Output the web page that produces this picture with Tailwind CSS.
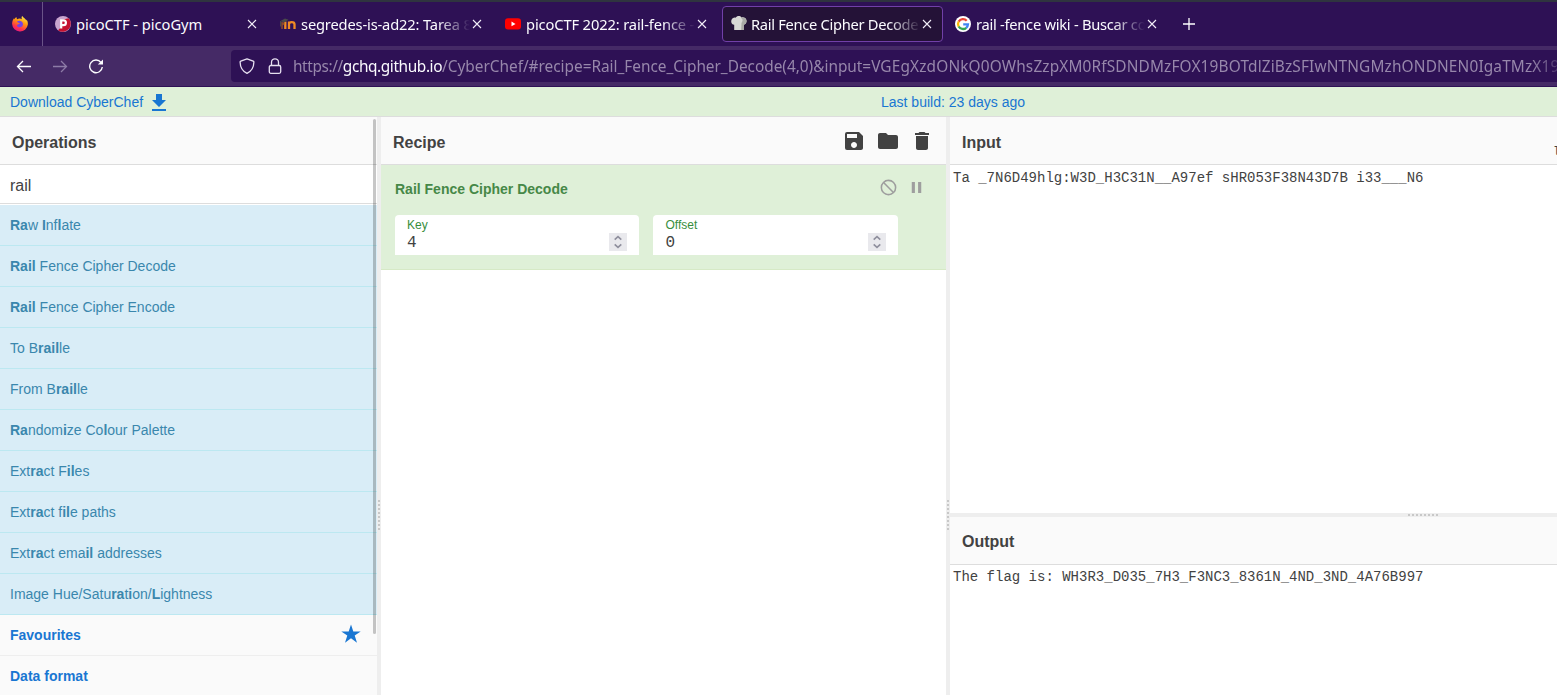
<!DOCTYPE html>
<html lang="en">
<head>
<meta charset="utf-8">
<title>Rail Fence Cipher Decode - CyberChef</title>
<script src="https://cdn.jsdelivr.net/npm/@tailwindcss/browser@4"></script>
</head>
<body class="w-[1557px] h-[695px] overflow-hidden bg-white font-['Liberation_Sans',sans-serif] text-sm text-[#424242] flex flex-col">
<svg class="hidden">
  <symbol id="close" viewBox="0 0 10 10"><path d="M1 1l8 8M9 1L1 9" stroke="#f3eef9" stroke-width="1.1" fill="none"/></symbol>
  <symbol id="spin" viewBox="0 0 18 18"><path d="M0 0h18v18H0z" fill="#e9e9ed"/><path d="M5.700 6.700L9 3.600l3.300 3.100M5.700 11.300L9 14.400l3.300-3.100" stroke="#8f8f9d" stroke-width="1.600" fill="none"/></symbol>
</svg>

<header class="shrink-0 h-[87px] border-t-2 border-[#2f343f] bg-[#2e1155] font-['Noto_Sans',sans-serif] text-[#fbfbfe]">
  <div class="h-11 flex items-center">
    <div class="w-[43px] h-11 border-r border-[#6a5488] flex items-center pl-3">
      <svg class="size-4" viewBox="0 0 16 16">
        <defs><linearGradient id="ff" x1=".8" y1="0" x2=".3" y2="1"><stop offset="0" stop-color="#fff44f"/><stop offset=".4" stop-color="#ff980e"/><stop offset=".75" stop-color="#ff3647"/><stop offset="1" stop-color="#e31587"/></linearGradient></defs>
        <path d="M10.300 0c-1 1-.9 2.300-.3 3.200C8.700 2.200 6.500 2.300 5.200 3.200 4.500 2.600 4.400 1.800 4.500 1.100 3.500 1.600 2.700 2.500 2.300 3.200L2 2.200C.8 3.500.1 5.700.1 8.100a7.900 7.900 0 0 0 15.700.6c.3-2.400-.5-4.400-1.400-5.200l.2 1.300C13.800 2.700 11.200 2 10.300 0z" fill="url(#ff)"/>
        <path d="M5 5.500c1.300-1 3.200-1 4.600 0 1.500 1.200 1.900 3.200.7 4.700-1.200 1.400-3.700 1.500-4.900.2C4.500 9.400 5 8.500 7.200 8c1-.5.4-1.200-.8-1.300C5.800 6.600 5.200 6.200 5 5.500z" fill="#7542e5"/>
      </svg>
    </div>
    <div class="flex gap-1">
      <div class="w-[221px] h-9 flex items-center pl-3">
        <svg class="size-4 shrink-0" viewBox="0 0 16 16"><circle cx="8" cy="8" r="8" fill="#c9a5cf"/><path d="M13.600 2.300A8 8 0 0 1 3 14.200l3-3V4z" fill="#c41230"/><path d="M6.200 12.500V4.300h2.300a2.400 2.400 0 0 1 0 4.800H6.500" fill="none" stroke="#fff" stroke-width="2.200"/></svg>
        <span class="ml-[5px] w-[169px] text-[14.7px] tracking-[-0.04px] leading-9 whitespace-nowrap overflow-hidden">picoCTF - picoGym</span>
        <svg class="size-[10px] shrink-0 ml-[2px]"><use href="#close"/></svg>
      </div>
      <div class="w-[221px] h-9 flex items-center pl-3">
        <svg class="size-4 shrink-0" viewBox="0 0 16 16"><path d="M5.300 13V5.500M9 13V8.300c0-3 5.500-3 5.500 0V13M9 13V5.500" fill="none" stroke="#f08a24" stroke-width="2.300"/><path d="M0 5.200L5 2.500l3.500 1.300-3.800 2.500zM0 5V10.500h1V6z" fill="#4a4a4a"/><path d="M1.300 6l3 .6v2l-1.500.6V13H1.300z" fill="#8a4b2c"/></svg>
        <span class="ml-[5px] w-[169px] text-[14.7px] tracking-[-0.16px] leading-9 whitespace-nowrap overflow-hidden [mask-image:linear-gradient(to_left,transparent,black_32px)]">segredes-is-ad22: Tarea 8</span>
        <svg class="size-[10px] shrink-0 ml-[2px]"><use href="#close"/></svg>
      </div>
      <div class="w-[221px] h-9 flex items-center pl-3">
        <svg class="size-4 shrink-0" viewBox="0 0 16 16"><rect y="2.200" width="16" height="11.300" rx="3" fill="#f00"/><path d="M6.500 5.600v4.600L10.500 7.900z" fill="#fff"/></svg>
        <span class="ml-[5px] w-[169px] text-[14.7px] tracking-[-0.13px] leading-9 whitespace-nowrap overflow-hidden [mask-image:linear-gradient(to_left,transparent,black_32px)]">picoCTF 2022: rail-fence -</span>
        <svg class="size-[10px] shrink-0 ml-[2px]"><use href="#close"/></svg>
      </div>
      <div class="w-[221px] h-9 ml-1 flex items-center pl-2 rounded bg-[#241237] border border-[#7140a8]">
        <svg class="size-4 shrink-0 mt-[-2px]" viewBox="0 0 16 16"><path d="M3.200 15V9.800C.8 9.300-.2 7.300.4 5.200 1 3 3 2.300 4.700 2.700 5.800.6 9.200.4 10.400 2.400c2.300-.7 4.800.5 5.100 3 .3 2-.8 4-2.700 4.400V15z" fill="#d8d8d5"/><path d="M10 3c2 1 2 3 .5 5l-.3 7h2.600V9.800c3-.8 3.600-4.400 1.400-6.400C13 2.300 11 2.300 10 3z" fill="#a9a9a6"/></svg>
        <span class="ml-[4px] w-[170px] text-[14.7px] tracking-[-0.3px] leading-9 whitespace-nowrap overflow-hidden [mask-image:linear-gradient(to_left,transparent,black_32px)]">Rail Fence Cipher Decode</span>
        <svg class="size-[10px] shrink-0 ml-[1px]"><use href="#close"/></svg>
      </div>
      <div class="w-[221px] h-9 flex items-center pl-2">
        <svg class="size-4 shrink-0" viewBox="0 0 16 16"><circle cx="8" cy="8" r="8" fill="#fff"/><g fill="none" stroke-width="2.300"><path d="M11.700 4.700A5 5 0 0 0 3.700 5.600" stroke="#ea4335"/><path d="M3.700 5.500A5 5 0 0 0 3.700 10.600" stroke="#fbbc05"/><path d="M3.700 10.500A5 5 0 0 0 11.300 11.800" stroke="#34a853"/><path d="M11.200 11.900A5 5 0 0 0 13 8.300H8.200" stroke="#4285f4"/></g></svg>
        <span class="ml-[5px] w-[169px] text-[14.7px] tracking-[-0.27px] leading-9 whitespace-nowrap overflow-hidden [mask-image:linear-gradient(to_left,transparent,black_32px)]">rail -fence wiki - Buscar co</span>
        <svg class="size-[10px] shrink-0 ml-[2px]"><use href="#close"/></svg>
      </div>
    </div>
    <svg class="size-3 ml-[15px]" viewBox="0 0 12 12"><path d="M6 0v12M0 6h12" stroke="#fff" stroke-width="1.300"/></svg>
  </div>
  <div class="h-10 bg-[#452a66] flex items-center">
    <div class="flex pl-4 gap-5 w-[231px] shrink-0">
      <svg class="size-4" viewBox="0 0 16 16" fill="none" stroke="#fbfbfe" stroke-width="1.300"><path d="M15 8.500H1.500M7 3L1.500 8.500 7 14"/></svg>
      <svg class="size-4" viewBox="0 0 16 16" fill="none" stroke="#8d7ba6" stroke-width="1.300"><path d="M1 8.500h13.500M9 3l5.500 5.500L9 14"/></svg>
      <svg class="size-4" viewBox="0 0 16 16" fill="none" stroke="#fbfbfe" stroke-width="1.400"><path d="M13 4.500A6.300 6.300 0 1 0 14.300 9"/><path d="M15 1.500v5H9.800z" fill="#fbfbfe" stroke="none"/></svg>
    </div>
    <div class="flex-1 min-w-0 h-8 rounded-l bg-[#2e1155] flex items-center pl-2">
      <svg class="size-4 shrink-0" viewBox="0 0 16 16" fill="none" stroke="#e6dff0" stroke-width="1.300"><path d="M8 .8l6.200 2.300c.5.200.7.500.7.900C14.800 9 13 13 8 15.300 3 13 1.200 9 1.100 4c0-.4.200-.7.700-.9z" stroke-linejoin="round"/></svg>
      <svg class="size-4 shrink-0 ml-3" viewBox="0 0 16 16" fill="none" stroke="#e6dff0" stroke-width="1.300"><rect x="2.300" y="7.500" width="11.400" height="7.800" rx="1.500"/><path d="M4.500 7.500V4.300a3.500 3.500 0 0 1 7 0v3.200"/></svg>
      <div class="ml-[10px] mt-[2px] flex-1 min-w-0 overflow-hidden whitespace-nowrap text-[15.4px] leading-8 text-[#9787ab] [mask-image:linear-gradient(to_left,rgb(0_0_0/0.3),black_26px)]"><span class="tracking-[-0.4px]">https://<span class="text-[#fbfbfe]">gchq.github.io</span></span><span class="tracking-[-0.02px]">/CyberChef/#recipe=Rail_Fence_Cipher_Decode(4,0)&amp;input=</span><span class="tracking-[0.15px]">VGEgXzdONkQ0OWhsZzpXM0RfSDNDMzFOX19BOTdlZiBzSFIwNTNGMzhONDNEN0IgaTMzX19</span></div>
    </div>
  </div>
</header>

<div class="shrink-0 h-[30px] bg-[#dff0d8] border-b border-[#ddd] flex items-center text-[#1976d2] leading-[30px]">
  <div class="w-[881px] flex items-center pl-[10px]"><span class="pt-px">Download CyberChef</span>
    <svg class="w-[14px] h-[17px] ml-[9px] mt-[2px]" viewBox="0 0 14 17"><path d="M4 0h6v6h4l-7 7-7-7h4zM0 15h14v2H0z" fill="#1976d2"/></svg>
  </div>
  <div class="pt-px">Last build: 23 days ago</div>
</div>

<main class="flex-1 min-h-0 flex">
  <section class="relative w-[377px] shrink-0 overflow-hidden">
    <h2 class="h-12 border-b border-[#ddd] bg-[#fafafa] pl-3 text-base font-bold leading-[52px]">Operations</h2>
    <div class="h-[39px] border-b border-[#ddd] pl-[10px] text-base leading-[41px]">rail</div>
    <ul class="mt-px leading-10 text-[#3a87ad] *:h-[41px] *:pl-[10px] *:border-b *:border-[#bce8f1] *:bg-[#d9edf7]">
      <li><b>Ra</b>w <b>I</b>nf<b>l</b>ate</li>
      <li><b>Rail</b> Fence Cipher Decode</li>
      <li><b>Rail</b> Fence Cipher Encode</li>
      <li>To B<b>rail</b>le</li>
      <li>From B<b>rail</b>le</li>
      <li><b>Ra</b>ndom<b>i</b>ze Co<b>l</b>our Palette</li>
      <li>Ext<b>ra</b>ct F<b>il</b>es</li>
      <li>Ext<b>ra</b>ct f<b>il</b>e paths</li>
      <li>Ext<b>ra</b>ct ema<b>il</b> addresses</li>
      <li>Image Hue/Satu<b>ra</b>t<b>i</b>on/<b>L</b>ightness</li>
    </ul>
    <div class="bg-[#fafafa] font-bold leading-10 text-[#1976d2]">
      <div class="h-[41px] border-b border-[#eee] pl-[10px] pr-4 flex items-center justify-between">Favourites
        <svg class="size-5 -mt-0.5" viewBox="0 0 20 20"><path d="M10 .4l2.300 7h7.400l-6 4.200 2.300 7.100-6-4.400-6 4.400 2.300-7.100-6-4.200h7.400z" fill="#1976d2"/></svg>
      </div>
      <div class="h-[41px] pl-[10px]">Data format</div>
    </div>
    <div class="absolute left-[373px] top-[2px] w-[3px] h-[515px] rounded-sm bg-black/22"></div>
  </section>
  <div class="w-1 shrink-0 bg-[#eee] pt-[383px] pl-px"><div class="w-[2px] h-[30px] bg-[repeating-linear-gradient(to_bottom,#c8c8c8_0,#c8c8c8_2px,transparent_2px,transparent_4px)]"></div></div>

  <section class="w-[565px] shrink-0">
    <div class="h-12 border-b border-[#ddd] bg-[#fafafa] pl-3 pr-3 flex items-center justify-between">
      <h2 class="text-base font-bold mt-[5px]">Recipe</h2>
      <div class="flex gap-[10px]">
        <svg class="size-6" viewBox="0 0 24 24" fill="#424242"><path d="M17 3H5a2 2 0 0 0-2 2v14a2 2 0 0 0 2 2h14c1.100 0 2-.9 2-2V7l-4-4zm-5 16c-1.660 0-3-1.340-3-3s1.340-3 3-3 3 1.340 3 3-1.340 3-3 3zm3-10H5V5h10v4z"/></svg>
        <svg class="size-6" viewBox="0 0 24 24" fill="#424242"><path d="M10 4H4c-1.100 0-2 .9-2 2v12c0 1.100.9 2 2 2h16c1.100 0 2-.9 2-2V8c0-1.100-.9-2-2-2h-8l-2-2z"/></svg>
        <svg class="size-6" viewBox="0 0 24 24" fill="#424242"><path d="M6 19c0 1.100.9 2 2 2h8c1.100 0 2-.9 2-2V7H6v12zM19 4h-3.500l-1-1h-5l-1 1H5v2h14V4z"/></svg>
      </div>
    </div>
    <div class="h-[105px] bg-[#dff0d8] border-b border-[#d6e9c6] px-[14px]">
      <div class="h-[50px] flex items-center justify-between pr-[6px]">
        <h3 class="font-bold text-[#468847] mt-[-2px]">Rail Fence Cipher Decode</h3>
        <div class="flex gap-[9px] mt-[-6px]">
          <svg class="size-[19px] -scale-x-100" viewBox="0 0 24 24" fill="#9e9e9e"><path d="M12 2a10 10 0 1 0 0 20 10 10 0 0 0 0-20zM4 12c0-4.420 3.580-8 8-8 1.850 0 3.550.63 4.900 1.690L5.690 16.900A7.900 7.900 0 0 1 4 12zm8 8c-1.850 0-3.550-.63-4.900-1.690L18.310 7.100A7.900 7.900 0 0 1 20 12c0 4.420-3.580 8-8 8z"/></svg>
          <svg class="size-[19px]" viewBox="0 0 24 24" fill="#9e9e9e"><path d="M6 19h4V5H6v14zm8-14v14h4V5h-4z"/></svg>
        </div>
      </div>
      <div class="flex gap-[14px]">
        <div class="w-[244px] h-10 rounded-t bg-white pl-3 pr-3 flex justify-between">
          <div class="pt-[3px]"><div class="text-xs leading-[14px] text-[#388e3c]">Key</div><div class="font-['Liberation_Mono',monospace] text-base leading-[22px]">4</div></div>
          <svg class="size-[18px] mt-[18px]"><use href="#spin"/></svg>
        </div>
        <div class="w-[245px] h-10 rounded-t bg-white pl-[12.500px] pr-3 flex justify-between">
          <div class="pt-[3px]"><div class="text-xs leading-[14px] text-[#388e3c]">Offset</div><div class="font-['Liberation_Mono',monospace] text-base leading-[22px]">0</div></div>
          <svg class="size-[18px] mt-[18px]"><use href="#spin"/></svg>
        </div>
      </div>
    </div>
  </section>
  <div class="w-1 shrink-0 bg-[#eee] pt-[383px] pl-px"><div class="w-[2px] h-[30px] bg-[repeating-linear-gradient(to_bottom,#c8c8c8_0,#c8c8c8_2px,transparent_2px,transparent_4px)]"></div></div>

  <section class="flex-1 min-w-0 flex flex-col">
    <div class="h-12 border-b border-[#ddd] bg-[#fafafa] pl-3 flex justify-between overflow-hidden">
      <h2 class="text-base font-bold leading-[52px]">Input</h2>
      <span class="w-[4px] overflow-hidden font-['Liberation_Mono',monospace] text-xs leading-[70px] whitespace-nowrap">l</span>
    </div>
    <div class="h-[348px] pl-[3px] pt-[3px] font-['Liberation_Mono',monospace] text-sm leading-5">Ta _7N6D49hlg:W3D_H3C31N__A97ef sHR053F38N43D7B i33___N6</div>
    <div class="h-1 bg-[#eee] pt-px pl-[458px]"><div class="h-[2px] w-[30px] bg-[repeating-linear-gradient(to_right,#c8c8c8_0,#c8c8c8_2px,transparent_2px,transparent_4px)]"></div></div>
    <h2 class="h-12 border-b border-[#ddd] bg-[#fafafa] pl-3 text-base font-bold leading-[50px]">Output</h2>
    <div class="pl-[3px] pt-[2px] font-['Liberation_Mono',monospace] text-sm leading-5">The flag is: WH3R3_D035_7H3_F3NC3_8361N_4ND_3ND_4A76B997</div>
  </section>
</main>
</body>
</html>
